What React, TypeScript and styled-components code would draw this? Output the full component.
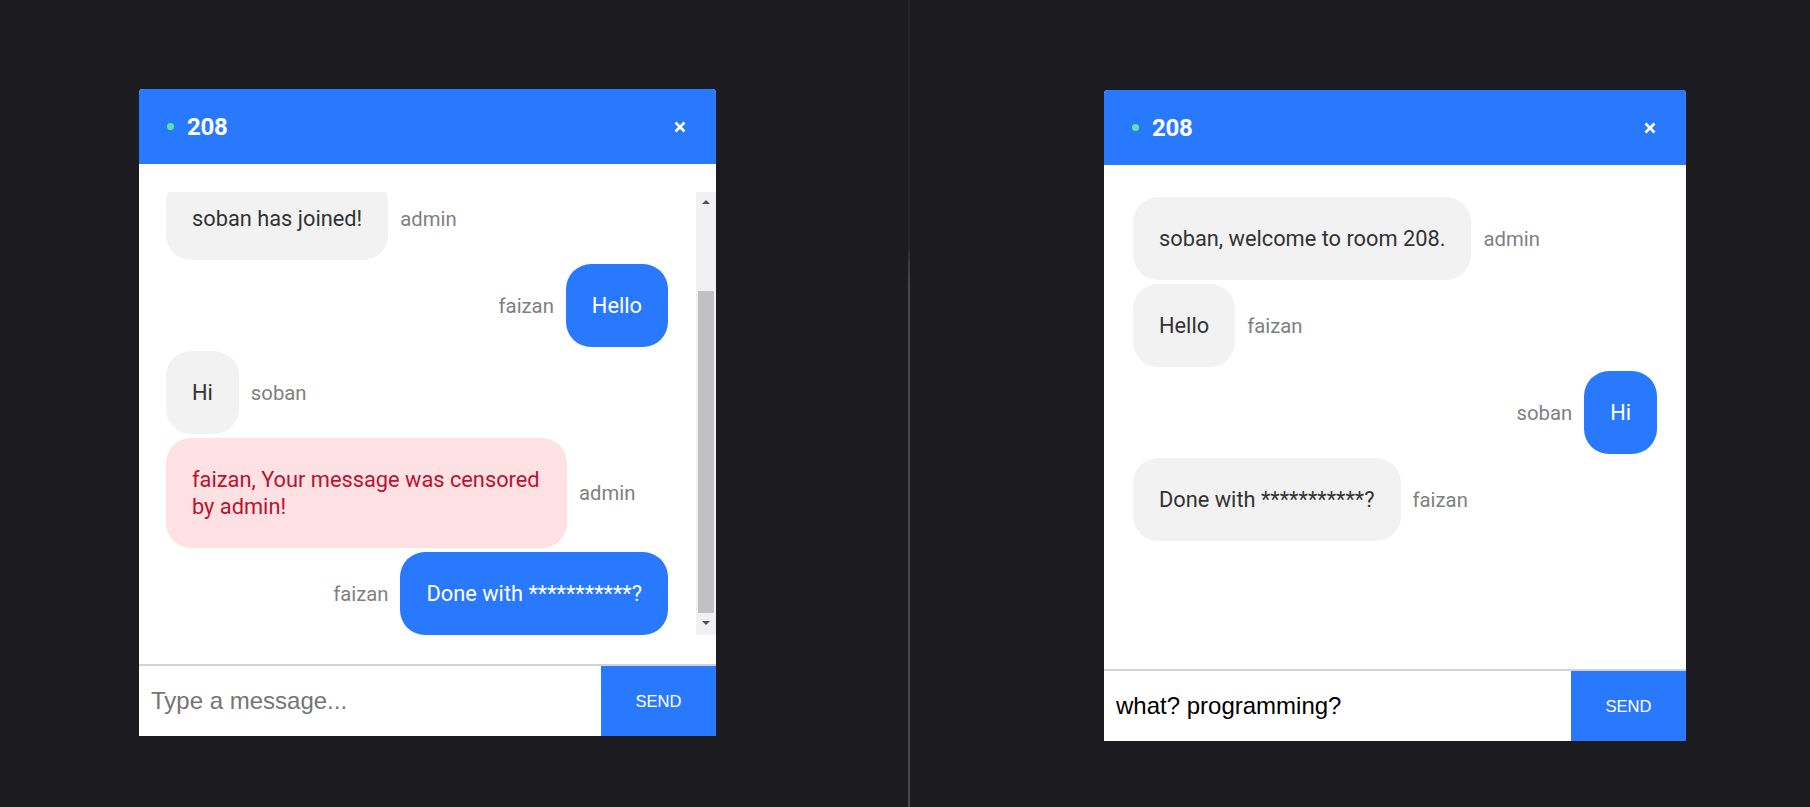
import React, { Fragment } from 'react';
import styled, { createGlobalStyle } from 'styled-components';

const GlobalStyle = createGlobalStyle`
  html, body {
    margin: 0;
    padding: 0;
    background: #1c1b20;
  }
  * {
    box-sizing: border-box;
  }
`;

const Page = styled.div`
  display: flex;
  width: 1810px;
  height: 807px;
  overflow: hidden;
  background: #1c1b20;
  font-family: Roboto, 'Noto Sans', sans-serif;
`;

const Half = styled.div<{ $left: number; $top: number; $width?: number }>`
  flex: ${(p) => (p.$width ? `0 0 ${p.$width}px` : '1')};
  padding: ${(p) => `${p.$top}px 0 0 ${p.$left}px`};
`;

const Divider = styled.div`
  flex: 0 0 2px;
  background: linear-gradient(
    to bottom,
    #252528 0,
    #252528 246px,
    #3a3a3e 262px,
    #48484d 290px,
    #48484d 100%
  );
`;

const Window = styled.div<{ $width: number; $height: number }>`
  width: ${(p) => p.$width}px;
  height: ${(p) => p.$height}px;
  display: flex;
  flex-direction: column;
  background: #fff;
  border-radius: 4px 4px 0 0;
`;

const Header = styled.div`
  flex: 0 0 75px;
  display: flex;
  align-items: center;
  padding: 0 29px 0 28px;
  background: #2979ff;
  border-radius: 4px 4px 0 0;
`;

const StatusDot = styled.span`
  width: 7px;
  height: 7px;
  border-radius: 50%;
  background: #5fe3a4;
`;

const RoomName = styled.div`
  margin-left: 13px;
  font-size: 24px;
  font-weight: 700;
  color: #fff;
  letter-spacing: -0.3px;
`;

const CloseButton = styled.button`
  margin-left: auto;
  width: 14px;
  height: 14px;
  padding: 0;
  border: none;
  background: none;
  display: flex;
  align-items: center;
  justify-content: center;
`;

const Body = styled.div`
  flex: 1;
  padding-top: 28px;
  min-height: 0;
`;

const ScrollArea = styled.div`
  display: flex;
  height: 443px;
`;

const MessageList = styled.div<{ $pad: string; $clip?: boolean }>`
  flex: 1;
  display: flex;
  flex-direction: column;
  justify-content: ${(p) => (p.$clip ? 'flex-end' : 'flex-start')};
  gap: 4px;
  padding: ${(p) => p.$pad};
  overflow: hidden;
`;

const Row = styled.div<{ $mine?: boolean }>`
  display: flex;
  flex-direction: ${(p) => (p.$mine ? 'row-reverse' : 'row')};
  align-items: center;
  flex-shrink: 0;
`;

const Bubble = styled.div<{ $tone: 'other' | 'mine' | 'alert' }>`
  max-width: 401px;
  padding: 28px 26px;
  border-radius: 25px;
  font-size: 21.8px;
  line-height: 27px;
  background: ${(p) =>
    p.$tone === 'mine' ? '#2979ff' : p.$tone === 'alert' ? '#fde1e3' : '#f2f2f2'};
  color: ${(p) =>
    p.$tone === 'mine' ? '#fff' : p.$tone === 'alert' ? '#bc1230' : '#333'};
`;

const Sender = styled.span`
  margin: 0 12px;
  font-size: 20.3px;
  color: #808080;
  white-space: nowrap;
`;

const ScrollBar = styled.div`
  flex: 0 0 20px;
  display: flex;
  flex-direction: column;
  background: #f1f1f1;
`;

const ArrowButton = styled.div<{ $down?: boolean }>`
  flex: 0 0 20px;
  display: flex;
  align-items: center;
  justify-content: center;
  padding: ${(p) => (p.$down ? '0 0 4px' : '0 0 0 0')};

  &::after {
    content: '';
    width: 0;
    height: 0;
    border-left: 4px solid transparent;
    border-right: 4px solid transparent;
    ${(p) =>
      p.$down ? 'border-top: 4px solid #505050;' : 'border-bottom: 4px solid #505050;'}
  }
`;

const Track = styled.div`
  flex: 1;
  display: flex;
  flex-direction: column;
  justify-content: flex-end;
  padding: 0 2px 2px;
`;

const Thumb = styled.div`
  height: 322px;
  background: #c1c1c1;
`;

const Footer = styled.div`
  flex: 0 0 72px;
  display: flex;
  border-top: 2px solid #d3d3d3;
`;

const MessageInput = styled.input`
  flex: 1;
  min-width: 0;
  border: none;
  outline: none;
  padding: 0 12px;
  font-family: 'Liberation Sans', Arial, sans-serif;
  font-size: 24px;
  color: #000;
  background: #fff;

  &::placeholder {
    color: #757575;
  }
`;

const SendButton = styled.button`
  flex: 0 0 115px;
  border: none;
  background: #2979ff;
  color: #fff;
  font-family: 'Liberation Sans', Arial, sans-serif;
  font-size: 16.5px;
  cursor: pointer;
`;

type Message = {
  text: string;
  user: string;
  tone: 'other' | 'mine' | 'alert';
};

const faizanView: Message[] = [
  { text: 'soban has joined!', user: 'admin', tone: 'other' },
  { text: 'Hello', user: 'faizan', tone: 'mine' },
  { text: 'Hi', user: 'soban', tone: 'other' },
  { text: 'faizan, Your message was censored by admin!', user: 'admin', tone: 'alert' },
  { text: 'Done with ***********?', user: 'faizan', tone: 'mine' },
];

const sobanView: Message[] = [
  { text: 'soban, welcome to room 208.', user: 'admin', tone: 'other' },
  { text: 'Hello', user: 'faizan', tone: 'other' },
  { text: 'Hi', user: 'soban', tone: 'mine' },
  { text: 'Done with ***********?', user: 'faizan', tone: 'other' },
];

const CloseIcon = () => (
  <svg width="12" height="12" viewBox="0 0 12 12">
    <path d="M1.5 1.5 L10.5 10.5 M10.5 1.5 L1.5 10.5" stroke="#fff" strokeWidth="2.6" />
  </svg>
);

const Messages = ({ items }: { items: Message[] }) => (
  <Fragment>
    {items.map((m, i) => (
      <Row key={i} $mine={m.tone === 'mine'}>
        <Bubble $tone={m.tone}>{m.text}</Bubble>
        <Sender>{m.user}</Sender>
      </Row>
    ))}
  </Fragment>
);

type ChatProps = {
  width: number;
  height: number;
  messages: Message[];
  scrolling?: boolean;
  draft?: string;
};

const ChatWindow = ({ width, height, messages, scrolling, draft }: ChatProps) => (
  <Window $width={width} $height={height}>
    <Header>
      <StatusDot />
      <RoomName>208</RoomName>
      <CloseButton aria-label="close">
        <CloseIcon />
      </CloseButton>
    </Header>
    <Body>
      {scrolling ? (
        <ScrollArea>
          <MessageList $pad="0 28px 0 27px" $clip>
            <Messages items={messages} />
          </MessageList>
          <ScrollBar>
            <ArrowButton />
            <Track>
              <Thumb />
            </Track>
            <ArrowButton $down />
          </ScrollBar>
        </ScrollArea>
      ) : (
        <MessageList $pad="4px 29px 0">
          <Messages items={messages} />
        </MessageList>
      )}
    </Body>
    <Footer>
      <MessageInput placeholder="Type a message..." defaultValue={draft} />
      <SendButton>SEND</SendButton>
    </Footer>
  </Window>
);

export default function App() {
  return (
    <Page>
      <GlobalStyle />
      <Half $width={908} $left={139} $top={89}>
        <ChatWindow width={577} height={647} messages={faizanView} scrolling />
      </Half>
      <Divider />
      <Half $left={194} $top={90}>
        <ChatWindow width={582} height={651} messages={sobanView} draft="what? programming?" />
      </Half>
    </Page>
  );
}
